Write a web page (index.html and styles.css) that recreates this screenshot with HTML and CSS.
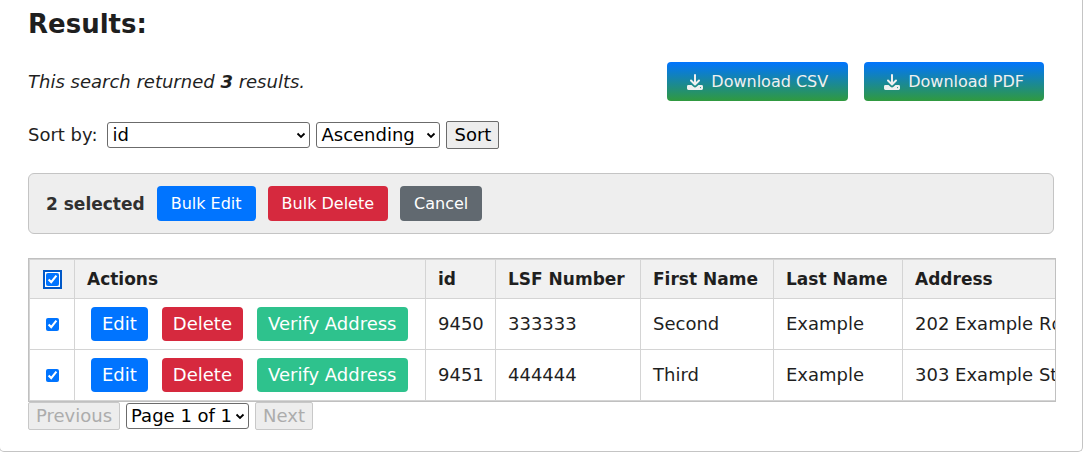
FILE: index.html
```html
<!DOCTYPE html>
<html lang="en">
<head>
<meta charset="utf-8">
<title>Results</title>
<link rel="stylesheet" href="styles.css">
</head>
<body>
<main class="card">
  <h2 class="title">Results:</h2>
  <div class="summary">
    <p class="count">This search returned <strong>3</strong> results.</p>
    <div class="downloads">
      <button type="button" class="download"><svg class="icon" viewBox="0 0 16 16" aria-hidden="true"><path d="M8 1v9M4 6.500l4 4 4-4" fill="none" stroke="currentColor" stroke-width="2" stroke-linecap="round" stroke-linejoin="round"/><path fill="currentColor" fill-rule="evenodd" d="M1.400 11h3.100l2 1.800q1.500 1.200 3 0l2-1.800h3.100q1.400 0 1.400 1.400v2.200q0 1.400-1.400 1.400H1.400Q0 16 0 14.600v-2.200Q0 11 1.400 11zM13.500 13a.6.6 0 1 0 0 1.200.6.6 0 1 0 0-1.200z"/></svg>Download CSV</button>
      <button type="button" class="download"><svg class="icon" viewBox="0 0 16 16" aria-hidden="true"><path d="M8 1v9M4 6.500l4 4 4-4" fill="none" stroke="currentColor" stroke-width="2" stroke-linecap="round" stroke-linejoin="round"/><path fill="currentColor" fill-rule="evenodd" d="M1.400 11h3.100l2 1.800q1.500 1.200 3 0l2-1.800h3.100q1.400 0 1.400 1.400v2.200q0 1.400-1.400 1.400H1.400Q0 16 0 14.600v-2.200Q0 11 1.400 11zM13.500 13a.6.6 0 1 0 0 1.200.6.6 0 1 0 0-1.200z"/></svg>Download PDF</button>
    </div>
  </div>
  <form class="controls sorting">
    <label class="sort-label" for="sort-field">Sort by:</label>
    <select id="sort-field" class="select field"><option>id</option><option>LSF Number</option><option>First Name</option><option>Last Name</option></select>
    <select class="select order" aria-label="Sort order"><option>Ascending</option><option>Descending</option></select>
    <button type="button" class="plain">Sort</button>
  </form>
  <div class="bulk">
    <strong class="selected">2 selected</strong>
    <button type="button" class="btn medium blue">Bulk Edit</button>
    <button type="button" class="btn medium red">Bulk Delete</button>
    <button type="button" class="btn medium gray">Cancel</button>
  </div>
  <div class="table-wrap">
    <table class="table">
      <colgroup><col class="col-check"><col class="col-actions"><col class="col-id"><col class="col-lsf"><col class="col-first"><col class="col-last"><col class="col-address"></colgroup>
      <thead>
        <tr><th class="check"><input type="checkbox" class="box focused" aria-label="Select all" checked></th><th>Actions</th><th>id</th><th>LSF Number</th><th>First Name</th><th>Last Name</th><th>Address</th></tr>
      </thead>
      <tbody>
        <tr>
          <td class="check"><input type="checkbox" class="box" aria-label="Select 9450" checked></td>
          <td><div class="actions"><button type="button" class="btn blue">Edit</button><button type="button" class="btn red">Delete</button><button type="button" class="btn green">Verify Address</button></div></td>
          <td>9450</td><td>333333</td><td>Second</td><td>Example</td><td>202 Example Rd</td>
        </tr>
        <tr>
          <td class="check"><input type="checkbox" class="box" aria-label="Select 9451" checked></td>
          <td><div class="actions"><button type="button" class="btn blue">Edit</button><button type="button" class="btn red">Delete</button><button type="button" class="btn green">Verify Address</button></div></td>
          <td>9451</td><td>444444</td><td>Third</td><td>Example</td><td>303 Example St</td>
        </tr>
      </tbody>
    </table>
  </div>
  <nav class="controls" aria-label="Pages">
    <button type="button" class="plain" disabled>Previous</button>
    <select class="select page" aria-label="Page"><option>Page 1 of 1</option></select>
    <button type="button" class="plain" disabled>Next</button>
  </nav>
</main>
</body>
</html>
```
FILE: styles.css
```css
* { box-sizing: border-box; }

body {
  margin: 0;
  background: #fff;
  color: #1f1f1f;
  font: 18px/24px Verdana, "DejaVu Sans", sans-serif;
}

button, select { font: inherit; }

.card {
  margin: 0 5px 0 -1px;
  padding: 8px 26px 21px 28px;
  border: 1px solid #c4c4c4;
  border-top: 0;
  border-radius: 0 0 5px 5px;
}

.title { margin: 0; font-size: 26px; line-height: 32px; }

.summary {
  display: flex;
  align-items: center;
  justify-content: space-between;
  margin-top: 22px;
  padding-right: 12px;
}

.count { margin: 0; font-style: italic; }

.downloads { display: flex; gap: 16px; }

.download {
  display: flex;
  align-items: center;
  gap: 8px;
  height: 39px;
  padding: 0 20px;
  border: 0;
  border-radius: 4px;
  background: linear-gradient(#0074ff, #309a3e);
  color: #f0f0f0;
  font-size: 16px;
}

.icon { width: 16px; height: 16px; }

.controls { display: flex; align-items: center; gap: 6px; }

.sorting { margin-top: 20px; }

.sort-label { padding-right: 4px; }

.select {
  appearance: none;
  height: 26px;
  padding: 0 16px 0 4px;
  border: 1px solid #6b6b6b;
  border-radius: 3px;
  background: #fff url("data:image/svg+xml,%3Csvg xmlns='http://www.w3.org/2000/svg' viewBox='0 0 10 7'%3E%3Cpath d='M1.500 1.500L5 5l3.500-3.500' fill='none' stroke='black' stroke-width='1.800'/%3E%3C/svg%3E") no-repeat right 3px center / 10px 7px;
  color: #000;
  line-height: 24px;
}

.field { width: 203px; }
.order { width: 124px; }
.page { width: 123px; }

.plain {
  height: 28px;
  padding: 0 7px;
  border: 1px solid #6b6b6b;
  border-radius: 2px;
  background: #ededed;
  color: #000;
}

.plain:disabled { border-color: #c8c8c8; color: #acacac; }

.bulk {
  display: flex;
  align-items: center;
  gap: 12px;
  margin: 24px 2px 24px 0;
  padding: 12px 17px;
  border: 1px solid #c4c4c4;
  border-radius: 6px;
  background: #eee;
}

.selected { color: #303030; font-size: 17px; }

.btn {
  height: 34px;
  padding: 0 11px;
  border: 0;
  border-radius: 4px;
  color: #fff;
}

.medium { height: 35px; padding: 0 14px; font-size: 16px; }
.blue { background: #0074ff; }
.red { background: #d6293e; }
.gray { background: #616970; }
.green { background: #2ec28d; }

.table-wrap {
  overflow: hidden;
  border: 1px solid #c0c0c0;
}

.table {
  width: 1180px;
  table-layout: fixed;
  border-collapse: separate;
  border-spacing: 0;
  border-top: 1px solid #d4d4d4;
  border-left: 1px solid #d4d4d4;
}

.table th, .table td {
  height: 51px;
  padding: 0 12px;
  border-right: 1px solid #d4d4d4;
  border-bottom: 1px solid #d4d4d4;
  text-align: left;
  white-space: nowrap;
}

.table th { height: 39px; background: #f1f1f1; font-size: 17px; }
.table .check { padding: 0; text-align: center; }

.col-check { width: 45px; }
.col-actions { width: 351px; }
.col-id { width: 70px; }
.col-lsf { width: 145px; }
.col-first { width: 133px; }
.col-last { width: 129px; }

.actions { display: flex; gap: 14px; padding-left: 4px; }

.box {
  display: block;
  width: 13px;
  height: 13px;
  margin: 0 auto;
  accent-color: #0074ff;
}

.focused {
  outline: none;
  border-radius: 2px;
  box-shadow: 0 0 0 1px #fff, 0 0 0 3px #0058c7;
}
```
